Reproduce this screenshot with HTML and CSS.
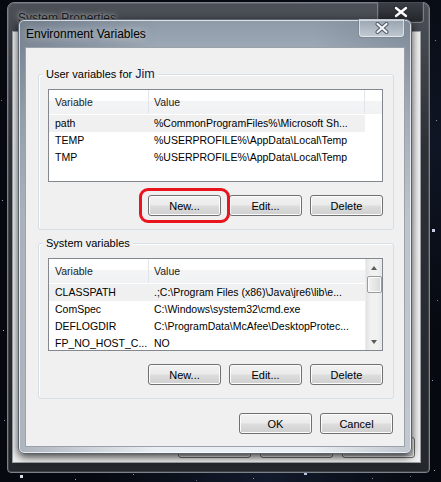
FILE: index.html
```html
<!DOCTYPE html>
<html>
<head>
<meta charset="utf-8">
<title>Environment Variables</title>
<link rel="stylesheet" href="styles.css">
</head>
<body>
<div class="desktop">
  <div class="window back">
    <div class="titlebar">
      <span class="title">System Properties</span>
      <span class="close close-back">
        <svg width="16" height="12" viewBox="0 0 16 12"><path d="M3 2 L13 10 M13 2 L3 10" stroke="#2a2e36" stroke-width="4.2" stroke-linecap="round"/><path d="M3 2 L13 10 M13 2 L3 10" stroke="#ffffff" stroke-width="2.4" stroke-linecap="round"/></svg>
      </span>
    </div>
    <div class="back-client">
      <div class="back-buttons">
        <span class="btn">OK</span>
        <span class="btn">Cancel</span>
        <span class="btn">Apply</span>
      </div>
    </div>
  </div>

  <div class="window front">
    <div class="titlebar">
      <span class="title">Environment Variables</span>
      <span class="close close-front">
        <svg width="16" height="12" viewBox="0 0 16 12"><path d="M3.5 2 L12.5 10 M12.5 2 L3.5 10" stroke="#4a5360" stroke-width="4" stroke-linecap="round"/><path d="M3.5 2 L12.5 10 M12.5 2 L3.5 10" stroke="#f4f6f8" stroke-width="2.2" stroke-linecap="round"/></svg>
      </span>
    </div>
    <div class="client">
      <div class="group">
        <span class="group-label">User variables for <span class="user">Jim</span></span>
        <div class="list">
          <div class="list-head">
            <span class="col1">Variable</span><span class="col2">Value</span><span class="col3"></span>
          </div>
          <div class="list-body">
            <div class="rows">
              <div class="row sel"><span class="col1">path</span><span class="col2">%CommonProgramFiles%\Microsoft Sh...</span></div>
              <div class="row"><span class="col1">TEMP</span><span class="col2">%USERPROFILE%\AppData\Local\Temp</span></div>
              <div class="row"><span class="col1">TMP</span><span class="col2">%USERPROFILE%\AppData\Local\Temp</span></div>
            </div>
          </div>
        </div>
        <div class="buttons">
          <span class="ring-wrap"><span class="btn">New...</span><span class="ring"></span></span>
          <span class="btn">Edit...</span>
          <span class="btn">Delete</span>
        </div>
      </div>

      <div class="group group2">
        <span class="group-label">System variables</span>
        <div class="list">
          <div class="list-body">
            <div class="rows">
              <div class="list-head short">
                <span class="col1">Variable</span><span class="col2">Value</span>
              </div>
              <div class="row sel"><span class="col1">CLASSPATH</span><span class="col2">.;C:\Program Files (x86)\Java\jre6\lib\e...</span></div>
              <div class="row"><span class="col1">ComSpec</span><span class="col2">C:\Windows\system32\cmd.exe</span></div>
              <div class="row"><span class="col1">DEFLOGDIR</span><span class="col2">C:\ProgramData\McAfee\DesktopProtec...</span></div>
              <div class="row"><span class="col1">FP_NO_HOST_C...</span><span class="col2">NO</span></div>
            </div>
            <div class="scrollbar">
              <span class="arrow up"></span>
              <span class="thumb"></span>
              <span class="track"></span>
              <span class="arrow down"></span>
            </div>
          </div>
        </div>
        <div class="buttons">
          <span class="btn">New...</span>
          <span class="btn">Edit...</span>
          <span class="btn">Delete</span>
        </div>
      </div>

      <div class="dialog-buttons">
        <span class="btn">OK</span>
        <span class="btn">Cancel</span>
      </div>
    </div>
  </div>
</div>
</body>
</html>
```

FILE: styles.css
```css
* { box-sizing: border-box; }

html, body {
  margin: 0;
  padding: 0;
}

body {
  width: 441px;
  height: 482px;
  overflow: hidden;
  background: #070a12;
  font-family: "Liberation Sans", Arial, sans-serif;
  font-size: 11px;
  color: #000;
}

.desktop {
  position: relative;
  width: 441px;
  height: 482px;
  background:
    radial-gradient(ellipse at 60% 100%, rgba(40, 60, 100, 0.35), transparent 45%),
    radial-gradient(ellipse at 100% 30%, rgba(30, 40, 70, 0.4), transparent 40%),
    #06090f;
}

.desktop::before {
  content: "";
  position: absolute;
  left: 0;
  top: 0;
  width: 1px;
  height: 1px;
  background: transparent;
  box-shadow:
    21px 476px 0 1px #d8dde8,
    75px 479px 0 0 #9aa3b8,
    133px 474px 0 0 #7d87a0,
    253px 478px 0 0 #8a94ad,
    305px 473px 0 1px #b4c2e0,
    372px 478px 0 0 #7a849c,
    434px 470px 0 0 #a9b1c4,
    436px 120px 0 0 #8a92a8,
    433px 230px 0 1px #c5cbe0,
    437px 300px 0 0 #6f7a96,
    432px 380px 0 0 #9aa3b8,
    435px 40px 0 0 #7f889f,
    2px 200px 0 0 #8c95aa,
    3px 330px 0 0 #a5adc0,
    1px 100px 0 0 #6a7590,
    4px 420px 0 0 #7c86a0,
    196px 480px 0 0 #5d6780,
    410px 476px 0 0 #6a7590;
}

/* ---------- windows ---------- */
.window {
  position: absolute;
  display: flex;
  flex-direction: column;
}

.titlebar {
  position: relative;
  display: flex;
  align-items: center;
  flex: none;
}

.title {
  white-space: nowrap;
}

.close {
  position: absolute;
  display: flex;
  align-items: center;
  justify-content: center;
}

/* back window (System Properties) */
.back {
  left: 7px;
  top: 2px;
  width: 423px;
  height: 471px;
  border: 1px solid #7d8189;
  border-radius: 7px 7px 4px 4px;
  background: linear-gradient(180deg, #4c5057 0%, #2e3137 30%, #24272c 100%);
  box-shadow: inset 0 0 0 1px rgba(255, 255, 255, 0.12);
  padding: 0 8px 9px 4px;
}

.back .titlebar {
  height: 27px;
  padding-left: 6px;
}

.back .title {
  font-family: "Liberation Sans", Arial, sans-serif;
  font-size: 12px;
  color: #1c1c1c;
  text-shadow: 0 0 6px rgba(230, 235, 240, 0.7), 0 0 3px rgba(230, 235, 240, 0.6);
  margin-top: 3px;
}

.close-back {
  right: -3px;
  top: -1px;
  width: 47px;
  height: 21px;
  border: 1px solid #7a7e85;
  border-top: none;
  border-radius: 0 0 4px 4px;
  background: linear-gradient(180deg, #3b3e44, #24272c);
  box-shadow: inset 0 0 0 1px rgba(255, 255, 255, 0.08);
}

.back-client {
  flex: 1;
  margin-top: 1px;
  background: #f0f0f0;
  border: 1px solid #9aa0a6;
  display: flex;
  align-items: flex-end;
  justify-content: flex-end;
  padding: 0 5px 4px 0;
}

.back-buttons {
  display: flex;
  gap: 9px;
}

.back-buttons .btn {
  width: 73px;
  height: 21px;
}

/* front window (Environment Variables) */
.front {
  left: 18px;
  top: 19px;
  width: 394px;
  height: 435px;
  border: 1px solid #5a6470;
  border-radius: 6px;
  background:
    linear-gradient(90deg, rgba(60, 70, 85, 0.35) 0%, rgba(255, 255, 255, 0) 35%, rgba(255, 255, 255, 0) 75%, rgba(70, 80, 95, 0.25) 100%),
    linear-gradient(180deg, #8e9aa8 0%, #c0cad5 22%, #e2e9ef 45%, #e9eff4 100%);
  box-shadow: 0 3px 9px rgba(0, 0, 0, 0.75), inset 0 0 0 1px rgba(255, 255, 255, 0.7);
  padding: 0 6px 6px 6px;
}

.front .titlebar {
  height: 27px;
  padding-left: 1px;
}

.front .title {
  font-size: 12px;
  color: #000;
  margin-top: 1px;
  text-shadow: 0 0 8px rgba(255, 255, 255, 0.9);
}

.close-front {
  right: 0px;
  top: -1px;
  width: 47px;
  height: 19px;
  border: 1px solid #7c8894;
  border-top: none;
  border-radius: 0 0 4px 4px;
  background: linear-gradient(180deg, rgba(200, 210, 220, 0.3), rgba(230, 236, 242, 0.6));
  box-shadow: inset 0 0 0 1px rgba(255, 255, 255, 0.55);
}

.client {
  flex: 1;
  background: #f0f0f0;
  border: 1px solid #9aa1a8;
  display: flex;
  flex-direction: column;
  padding: 26px 10px 0 12px;
}

/* ---------- group boxes ---------- */
.group {
  position: relative;
  height: 156px;
  border: 1px solid #d5dfe5;
  border-radius: 3px;
  box-shadow: inset 1px 1px 0 #fff;
  padding: 14px 10px 0 9px;
  display: flex;
  flex-direction: column;
}

.group2 {
  margin-top: 13px;
}

.group-label {
  position: absolute;
  left: 4px;
  top: -8px;
  padding: 0 3px;
  background: #f0f0f0;
  color: #000;
  font-size: 11px;
  line-height: 15px;
  white-space: nowrap;
}

.user {
  font-size: 12.5px;
  color: #12205a;
}

/* ---------- list view ---------- */
.list {
  height: 93px;
  border: 1px solid #828790;
  background: #fff;
  display: flex;
  flex-direction: column;
  flex: none;
  font-size: 10.5px;
}

.list-head {
  display: flex;
  height: 24px;
  flex: none;
  margin-bottom: 1px;
  background: linear-gradient(180deg, #ffffff 0%, #ffffff 45%, #f3f4f6 46%, #f1f2f4 100%);
}

.list-head span {
  display: flex;
  align-items: center;
  height: 100%;
  border-right: 1px solid #e3e5e9;
  color: #222;
}

.list-head .col3 {
  flex: 1;
  border-right: none;
}

.list-head.short .col2 {
  border-right: none;
}

.col1 {
  width: 100px;
  padding-left: 6px;
  flex: none;
  white-space: nowrap;
}

.col2 {
  width: 216px;
  padding-left: 5px;
  flex: none;
  white-space: nowrap;
}

.list-body {
  flex: 1;
  display: flex;
  min-height: 0;
}

.rows {
  width: 316px;
  flex: none;
  display: flex;
  flex-direction: column;
}

.row {
  display: flex;
  height: 17px;
  align-items: center;
  width: 316px;
}

.row.sel {
  background: #f0f0f0;
}

.row span {
  line-height: 17px;
}

/* scrollbar */
.scrollbar {
  width: 17px;
  flex: none;
  background: linear-gradient(90deg, #e3e3e3, #f1f1f1 30%, #f1f1f1 70%, #e8e8e8);
  border-left: 1px solid #ececec;
  display: flex;
  flex-direction: column;
  align-items: center;
}

.arrow {
  width: 0;
  height: 0;
  flex: none;
  border-left: 3.5px solid transparent;
  border-right: 3.5px solid transparent;
}

.arrow.up {
  margin-top: 7px;
  border-bottom: 4px solid #5b5b5b;
}

.arrow.down {
  margin-bottom: 6px;
  border-top: 4px solid #5b5b5b;
}

.thumb {
  margin-top: 6px;
  width: 15px;
  height: 17px;
  flex: none;
  border: 1px solid #9b9b9b;
  border-radius: 2px;
  background: linear-gradient(90deg, #f3f3f3, #e6e6e6 50%, #d8d8d8);
  box-shadow: inset 0 0 0 1px #fbfbfb;
}

.track {
  flex: 1;
}

/* ---------- buttons ---------- */
.buttons {
  display: flex;
  justify-content: flex-end;
  gap: 8px;
  margin-top: 13px;
}

.btn {
  display: flex;
  align-items: center;
  justify-content: center;
  width: 73px;
  height: 21px;
  border: 1px solid #707070;
  border-radius: 3px;
  background: linear-gradient(180deg, #f2f2f2 0%, #ebebeb 48%, #dddddd 52%, #cfcfcf 100%);
  box-shadow: inset 0 0 0 1px #fcfcfc;
  color: #000;
  font-size: 11px;
  white-space: nowrap;
}

.ring-wrap {
  position: relative;
  display: flex;
}

.ring {
  position: absolute;
  left: -9px;
  top: -7px;
  width: 91px;
  height: 35px;
  border: 3px solid #e8141e;
  border-radius: 9px;
}

.dialog-buttons {
  display: flex;
  justify-content: flex-end;
  gap: 8px;
  margin-top: 14px;
  padding-right: 1px;
}
```
